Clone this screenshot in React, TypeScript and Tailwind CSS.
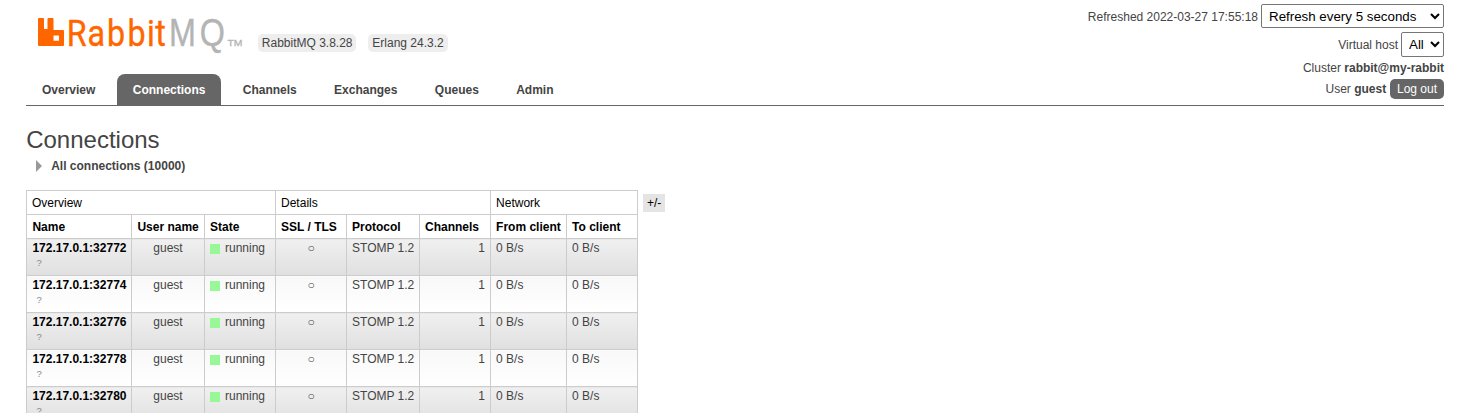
import React from 'react';

const tabs = ['Overview', 'Connections', 'Channels', 'Exchanges', 'Queues', 'Admin'];
const columns = ['Name', 'User name', 'State', 'SSL / TLS', 'Protocol', 'Channels', 'From client', 'To client'];
const ports = [32772, 32774, 32776, 32778, 32780];

const cell = 'border border-[#ccc] px-[5px]';

function Logo() {
  return (
    <svg className="block h-[40px] w-[210px]" viewBox="36 14 210 40" aria-label="RabbitMQ">
      <path
        fill="#f60"
        fillRule="evenodd"
        d="M39 18h4a1 1 0 0 1 1 1v10h3.500V19a1 1 0 0 1 1-1h4a1 1 0 0 1 1 1v11h9.500a1 1 0 0 1 1 1v14a1 1 0 0 1-1 1H39a1 1 0 0 1-1-1V19a1 1 0 0 1 1-1zM53.500 35.500v5.300h5.500v-5.300z"
      />
      <text transform="scale(.87 1)" x="76.8 100.6 123 146.7 168.9 178.5" y="46" fontFamily="Roboto, sans-serif" fontSize="37" fill="#f60" stroke="#f60" strokeWidth=".4">
        Rabbit
      </text>
      <text transform="scale(.84 1)" x="201.2 237.7" y="46" fontFamily="'Liberation Sans', sans-serif" fontSize="38.500" fill="#b4b4b4" stroke="#b4b4b4" strokeWidth=".4">
        MQ
      </text>
      <text x="227.500" y="46" fontFamily="'Liberation Sans', sans-serif" fontSize="9.500" fill="#b4b4b4" stroke="#b4b4b4" strokeWidth=".3" textLength="15" lengthAdjust="spacingAndGlyphs">
        TM
      </text>
    </svg>
  );
}

function Header() {
  return (
    <header className="mx-[26px] flex h-[106px] justify-between border-b border-[#666]">
      <div className="flex flex-col">
        <div className="flex h-[74px] pl-[10px] pt-[14px]">
          <Logo />
          <div className="flex gap-[12px] pl-[12px] pt-[20px]">
            <span className="h-[18px] rounded-[5px] bg-[#eee] px-[3.800px] leading-[18px]">RabbitMQ 3.8.28</span>
            <span className="h-[18px] rounded-[5px] bg-[#eee] px-[4px] leading-[18px]">Erlang 24.3.2</span>
          </div>
        </div>
        <nav className="flex gap-[5.350px]">
          {tabs.map((t) => (
            <a
              key={t}
              className={
                'h-[31px] rounded-t-[8px] px-[16px] font-bold leading-[32px] ' +
                (t === 'Connections' ? 'bg-[#666] text-white' : 'text-[#444]')
              }
            >
              {t}
            </a>
          ))}
        </nav>
      </div>
      <div className="flex flex-col items-end pt-[4px]">
        <div className="flex h-[24px] items-center gap-[3px]">
          <span className="pt-[2px]">Refreshed 2022-03-27 17:55:18</span>
          <select className="h-[24px] w-[183px] rounded-[2px] border border-[#767676] bg-white px-[3px] text-[13.333px] text-black">
            <option>Refresh every 5 seconds</option>
          </select>
        </div>
        <div className="mt-[4px] flex h-[25px] items-center gap-[3px]">
          <span className="pt-[2px]">Virtual host</span>
          <select className="h-[25px] w-[43px] rounded-[2px] border border-[#767676] bg-white px-[3px] text-[13.333px] text-black">
            <option>All</option>
          </select>
        </div>
        <div className="mt-[3px] h-[16px] leading-[16px]">
          Cluster <b>rabbit@my-rabbit</b>
        </div>
        <div className="mt-[3px] flex h-[20px] items-center gap-[3.800px] leading-[20px]">
          <span>
            User <b>guest</b>
          </span>
          <button className="h-[20px] rounded-[5px] bg-[#666] px-[7px] text-white">Log out</button>
        </div>
      </div>
    </header>
  );
}

function ConnectionsTable() {
  return (
    <table className="w-[612px] table-fixed border-collapse">
      <colgroup>
        <col className="w-[105px]" />
        <col className="w-[73px]" />
        <col className="w-[71px]" />
        <col className="w-[71px]" />
        <col className="w-[73px]" />
        <col className="w-[71px]" />
        <col className="w-[76px]" />
        <col className="w-[71px]" />
      </colgroup>
      <thead className="text-left text-black">
        <tr className="h-[24px]">
          <th colSpan={3} className={cell + ' pt-[2px] font-normal'}>Overview</th>
          <th colSpan={3} className={cell + ' pt-[2px] font-normal'}>Details</th>
          <th colSpan={2} className={cell + ' pt-[2px] font-normal'}>Network</th>
        </tr>
        <tr className="h-[24px]">
          {columns.map((c, i) => (
            <th key={c} className={cell + ' whitespace-nowrap pt-[2px] font-bold ' + (i < 2 ? 'pl-[5.400px] pr-0' : '')}>{c}</th>
          ))}
        </tr>
      </thead>
      <tbody>
        {ports.map((p, i) => {
          const td =
            cell +
            ' whitespace-nowrap pt-[2px] align-top bg-linear-to-b ' +
            (i % 2 === 0 ? 'from-[#f0f0f0] to-[#e0e0e0]' : 'from-[#f8f8f8] to-white');
          return (
            <tr key={p} className="h-[37px]">
              <td className={td}>
                <b className="block pl-[.4px] text-black">172.17.0.1:{p}</b>
                <span className="block pl-[4.500px] text-[9.500px] leading-[14px] text-[#888]">?</span>
              </td>
              <td className={td + ' text-center'}>guest</td>
              <td className={td}>
                <div className="flex items-center gap-[5px]">
                  <i className="mt-px size-[10px] bg-[#98f898]" />
                  running
                </div>
              </td>
              <td className={td + ' text-center'}>○</td>
              <td className={td}>STOMP 1.2</td>
              <td className={td + ' text-right'}>1</td>
              <td className={td}>0 B/s</td>
              <td className={td}>0 B/s</td>
            </tr>
          );
        })}
      </tbody>
    </table>
  );
}

export default function App() {
  return (
    <div className="h-[413px] overflow-hidden bg-white font-['Liberation_Sans',Arial,sans-serif] text-[12px] leading-[15px] text-[#444]">
      <Header />
      <main className="px-[26px] pt-[18px]">
        <h1 className="pl-[.2px] text-[24px] leading-[32px]">Connections</h1>
        <h2 className="flex h-[20px] items-center gap-[9.200px] pl-[10px] font-bold">
          <svg className="h-[12px] w-[6px]" viewBox="0 0 6 12">
            <path d="M0 0L6 6L0 12Z" fill="#999" />
          </svg>
          All connections (10000)
        </h2>
        <div className="flex items-start gap-[5px] pt-[14px]">
          <ConnectionsTable />
          <button className="mt-[4px] h-[18px] w-[22px] bg-[#e4e4e4] text-center leading-[18px] text-black">+/-</button>
        </div>
      </main>
    </div>
  );
}
